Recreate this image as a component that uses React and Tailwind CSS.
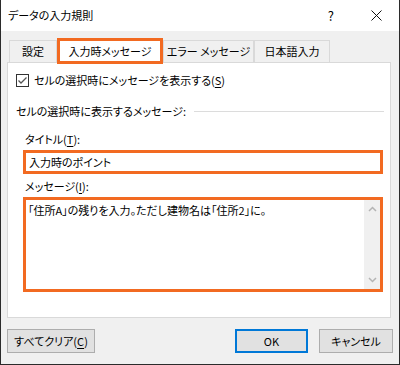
import React from 'react';

const U = ({ children }) => <span className="underline underline-offset-2">{children}</span>;

const Tab = ({ label, active, w }) =>
    active ? (
        <div
            className={`${w} h-[26px] -mb-[2px] relative z-10 bg-white border-[3px] border-[#f26a21] flex items-center justify-center whitespace-nowrap`}
        >
            {label}
        </div>
    ) : (
        <div className={`${w} h-[22px] bg-[#f0f0f0] border border-b-0 border-[#d9d9d9] flex items-center justify-center whitespace-nowrap`}>
            {label}
        </div>
    );

const App = () => {
    return (
        <div className="w-[400px] h-[365px] bg-[#f0f0f0] border-x border-b border-[#2b2b2b] flex flex-col text-[11px] text-black font-['Noto_Sans_CJK_JP','Noto_Sans',sans-serif] [font-feature-settings:'palt'] leading-none">
            {/* title bar */}
            <div className="h-[31px] bg-white flex items-center pl-[7px] shrink-0">
                <span className="text-[11px]">データの入力規則</span>
                <span className="ml-auto mr-[37px] text-[13px]">?</span>
                <svg width="11" height="11" viewBox="0 0 11 11" className="mr-[17px]">
                    <path d="M0.5 0.5L10.5 10.5M10.5 0.5L0.5 10.5" stroke="#111" strokeWidth="1" />
                </svg>
            </div>

            {/* tabs */}
            <div className="h-[31px] flex items-end pl-[8px] shrink-0">
                <Tab label="設定" w="w-[48px]" />
                <Tab label="入力時メッセージ" w="w-[106px]" active />
                <Tab label="エラー メッセージ" w="w-[91px]" />
                <Tab label="日本語入力" w="w-[76px]" />
            </div>

            {/* panel */}
            <div className="ml-[6px] w-[384px] h-[256px] bg-white border border-[#d9d9d9] flex flex-col pl-[8px] pr-[6px] shrink-0">
                <div className="flex items-center mt-[11px] h-[13px]">
                    <svg width="13" height="13" viewBox="0 0 13 13">
                        <rect x="0.5" y="0.5" width="12" height="12" fill="white" stroke="#333" />
                        <path d="M2.5 6.5L5 9L10.5 3.5" fill="none" stroke="#555" strokeWidth="1.3" />
                    </svg>
                    <span className="ml-[5px]">
                        セルの選択時にメッセージを表示する(<U>S</U>)
                    </span>
                </div>

                <div className="flex items-center mt-[19px]">
                    <span>セルの選択時に表示するメッセージ:</span>
                    <div className="flex-1 h-px bg-[#dcdcdc] ml-[8px]" />
                </div>

                <div className="pl-[9px] mt-[17px]">
                    タイトル(<U>T</U>):
                </div>
                <div className="ml-[7px] mt-[5px] w-[360px] h-[24px] border-[3px] border-[#f26a21] flex items-center pl-[3px]">
                    入力時のポイント
                </div>

                <div className="pl-[9px] mt-[7px]">
                    メッセージ(<U>I</U>):
                </div>
                <div className="ml-[7px] mt-[5px] w-[360px] h-[95px] border-[3px] border-[#f26a21] flex">
                    <div className="flex-1 pl-[2px] pt-[5px]">
                        「住所A」の残りを入力。ただし建物名は「住所2」に。
                    </div>
                    <div className="w-[16px] bg-[#f0f0f0] flex flex-col items-center justify-between py-[6px]">
                        <svg width="9" height="6" viewBox="0 0 9 6">
                            <path d="M1 5L4.5 1.5L8 5" fill="none" stroke="#b4b4b4" strokeWidth="1.5" />
                        </svg>
                        <svg width="9" height="6" viewBox="0 0 9 6">
                            <path d="M1 1L4.5 4.5L8 1" fill="none" stroke="#b4b4b4" strokeWidth="1.5" />
                        </svg>
                    </div>
                </div>
            </div>

            {/* buttons */}
            <div className="flex items-center mt-[11px] pl-[6px]">
                <button className="w-[88px] h-[24px] bg-[#e1e1e1] border border-[#adadad] flex items-center justify-center">
                    すべてクリア(<U>C</U>)
                </button>
                <button className="ml-auto w-[73px] h-[24px] bg-[#e1e1e1] border-2 border-[#0078d7] flex items-center justify-center">
                    OK
                </button>
                <button className="ml-[11px] mr-[6px] w-[74px] h-[24px] bg-[#e1e1e1] border border-[#adadad] flex items-center justify-center">
                    キャンセル
                </button>
            </div>
        </div>
    );
};

export default App;
